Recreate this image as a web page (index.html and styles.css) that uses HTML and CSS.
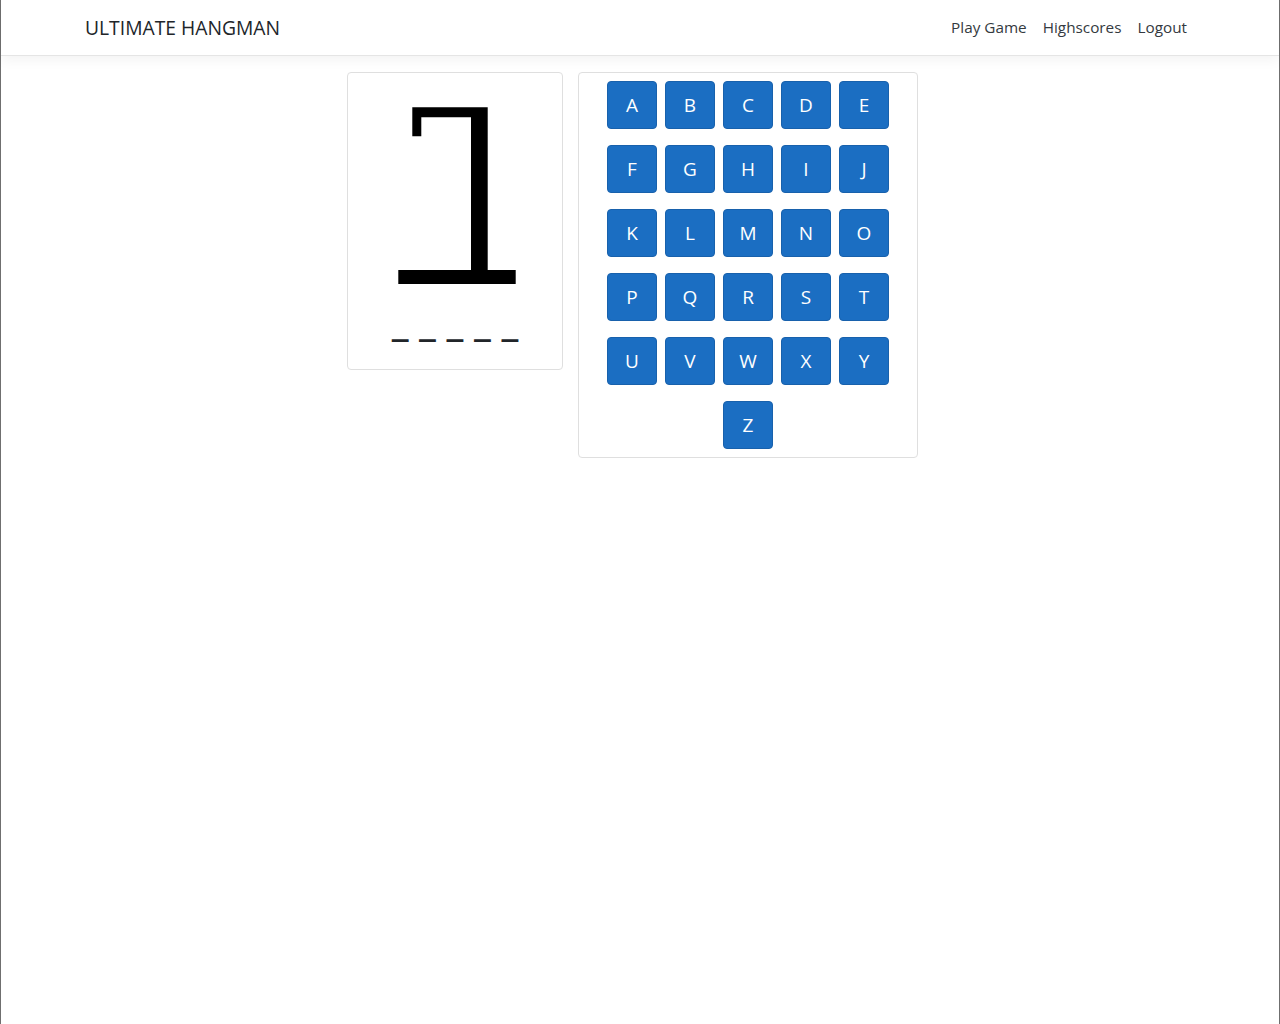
FILE: index.html
```html
<!DOCTYPE html>
<html lang="en">
<head>
<meta charset="utf-8">
<title>Ultimate Hangman</title>
<link rel="stylesheet" href="styles.css">
</head>
<body>
<div class="frame">
  <header class="navbar">
    <div class="container nav-inner">
      <a class="brand" href="#">ULTIMATE HANGMAN</a>
      <nav class="nav-links">
        <a class="nav-link" href="#">Play Game</a>
        <a class="nav-link" href="#">Highscores</a>
        <a class="nav-link" href="#">Logout</a>
      </nav>
    </div>
  </header>
  <main class="game">
    <section class="card gallows-card">
      <svg class="gallows" width="214" height="240" viewBox="0 0 214 240">
        <path d="M50.3 197H123V34.3H64.3V63.3H73.3V44.3H123V197Z M123 34.3H139.7V197H167.7V211H50.3V197H123Z" fill="#000" fill-rule="nonzero"/>
      </svg>
      <div class="word"><span>_</span><span>_</span><span>_</span><span>_</span><span>_</span></div>
    </section>
    <section class="card keys-card">
      <div class="keys">
        <button class="key">A</button><button class="key">B</button><button class="key">C</button><button class="key">D</button><button class="key">E</button>
        <button class="key">F</button><button class="key">G</button><button class="key">H</button><button class="key">I</button><button class="key">J</button>
        <button class="key">K</button><button class="key">L</button><button class="key">M</button><button class="key">N</button><button class="key">O</button>
        <button class="key">P</button><button class="key">Q</button><button class="key">R</button><button class="key">S</button><button class="key">T</button>
        <button class="key">U</button><button class="key">V</button><button class="key">W</button><button class="key">X</button><button class="key">Y</button>
        <button class="key">Z</button>
      </div>
    </section>
  </main>
</div>
</body>
</html>
```

FILE: styles.css
```css
* { box-sizing: border-box; }
html, body { margin: 0; padding: 0; background: #fff; }
body {
  font-family: "Open Sans", "Noto Sans", "Liberation Sans", sans-serif;
  color: #212529;
}
.frame {
  min-height: 100vh;
  border-left: 1px solid #6f6f6f;
  border-right: 1px solid #6f6f6f;
}
.navbar {
  height: 56px;
  border-bottom: 1px solid #e5e5e5;
  box-shadow: 0 4px 12px rgba(0,0,0,.05);
  margin-bottom: 16px;
}
.container {
  width: 1140px;
  margin: 0 auto;
  padding: 0 15px;
}
.nav-inner {
  height: 55px;
  display: flex;
  align-items: center;
  justify-content: space-between;
}
.brand {
  font-size: 19.3px;
  color: #212529;
  text-decoration: none;
  margin-top: -1px;
}
.nav-links { display: flex; margin-top: -1px; }
.nav-link {
  font-size: 15.3px;
  color: #343a40;
  text-decoration: none;
  padding: 8px;
}
.game {
  display: flex;
  justify-content: center;
  align-items: flex-start;
  gap: 15px;
  padding-right: 15px;
}
.card {
  border: 1px solid #dfdfdf;
  border-radius: 4px;
  background: #fff;
}
.gallows-card {
  width: 216px;
  height: 298px;
}
.gallows { display: block; }
.word {
  display: flex;
  justify-content: center;
  gap: 10.6px;
  font-family: "DejaVu Sans Mono", monospace;
  font-weight: bold;
  font-size: 28px;
  line-height: 34px;
  color: #212529;
  margin-top: -4px;
}
.word span { display: block; }
.keys-card {
  width: 340px;
  padding: 0 24px;
}
.keys {
  display: flex;
  flex-wrap: wrap;
  justify-content: center;
  padding: 0;
}
.key {
  width: 50px;
  height: 48px;
  margin: 8px 4px;
  background: #1b6ec2;
  border: 1px solid #1861ac;
  border-radius: 4px;
  color: #fff;
  font-family: "Open Sans", "Noto Sans", sans-serif;
  font-size: 19px;
  padding: 0;
  line-height: 1;
}
```
